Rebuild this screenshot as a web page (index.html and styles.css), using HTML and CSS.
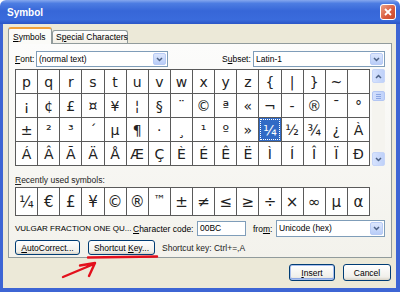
FILE: index.html
```html
<!DOCTYPE html>
<html>
<head>
    <title>Symbol</title>
    <link rel="stylesheet" href="styles.css">
</head>
<body>
    <div class="window">
        <!-- Title bar -->
        <div class="titlebar">
            <span class="title">Symbol</span>
            <span class="close">
                <svg width="8" height="8" viewBox="0 0 8 8"><path d="M1 1L7 7M7 1L1 7" stroke="#fff" stroke-width="1.8"/></svg>
            </span>
        </div>

        <div class="client">
            <div class="tabs">
                <div class="tab active"><u>S</u>ymbols</div>
                <div class="tab">S<u>p</u>ecial Characters</div>
            </div>

            <div class="panel">
                <div class="font-row">
                    <label class="font-label"><u>F</u>ont:</label>
                    <div class="select font-select">
                        <span class="value">(normal text)</span>
                        <span class="drop"><svg width="7" height="5" viewBox="0 0 7 5"><path d="M1 1L3.5 3.5L6 1" stroke="#4d6185" stroke-width="1.5" fill="none"/></svg></span>
                    </div>
                    <label class="subset-label">S<u>u</u>bset:</label>
                    <div class="select subset-select">
                        <span class="value">Latin-1</span>
                        <span class="drop"><svg width="7" height="5" viewBox="0 0 7 5"><path d="M1 1L3.5 3.5L6 1" stroke="#4d6185" stroke-width="1.5" fill="none"/></svg></span>
                    </div>
                </div>

                <div class="grid-wrap">
                    <div class="grid">
                        <div class="cell">p</div><div class="cell">q</div><div class="cell">r</div><div class="cell">s</div>
                        <div class="cell">t</div><div class="cell">u</div><div class="cell">v</div><div class="cell">w</div>
                        <div class="cell">x</div><div class="cell">y</div><div class="cell">z</div><div class="cell">{</div>
                        <div class="cell">|</div><div class="cell">}</div><div class="cell">~</div><div class="cell"></div>

                        <div class="cell">¡</div><div class="cell">¢</div><div class="cell">£</div><div class="cell">¤</div>
                        <div class="cell">¥</div><div class="cell">¦</div><div class="cell">§</div><div class="cell">¨</div>
                        <div class="cell">©</div><div class="cell">ª</div><div class="cell">«</div><div class="cell">¬</div>
                        <div class="cell">-</div><div class="cell">®</div><div class="cell">¯</div><div class="cell">°</div>

                        <div class="cell">±</div><div class="cell">²</div><div class="cell">³</div><div class="cell">´</div>
                        <div class="cell">µ</div><div class="cell">¶</div><div class="cell">·</div><div class="cell">¸</div>
                        <div class="cell">¹</div><div class="cell">º</div><div class="cell">»</div><div class="cell selected">¼</div>
                        <div class="cell">½</div><div class="cell">¾</div><div class="cell">¿</div><div class="cell">À</div>

                        <div class="cell">Á</div><div class="cell">Â</div><div class="cell">Ã</div><div class="cell">Ä</div>
                        <div class="cell">Å</div><div class="cell">Æ</div><div class="cell">Ç</div><div class="cell">È</div>
                        <div class="cell">É</div><div class="cell">Ê</div><div class="cell">Ë</div><div class="cell">Ì</div>
                        <div class="cell">Í</div><div class="cell">Î</div><div class="cell">Ï</div><div class="cell">Ð</div>
                    </div>
                    <div class="scrollbar">
                        <div class="sb-btn"><svg width="7" height="5" viewBox="0 0 7 5"><path d="M1 4L3.5 1.5L6 4" stroke="#4d6185" stroke-width="1.5" fill="none"/></svg></div>
                        <div class="sb-thumb"><span></span><span></span><span></span></div>
                        <div class="sb-track"></div>
                        <div class="sb-btn"><svg width="7" height="5" viewBox="0 0 7 5"><path d="M1 1L3.5 3.5L6 1" stroke="#4d6185" stroke-width="1.5" fill="none"/></svg></div>
                    </div>
                </div>

                <div class="recent-label"><u>R</u>ecently used symbols:</div>
                <div class="recent">
                    <div class="cell">¼</div><div class="cell">€</div><div class="cell">£</div><div class="cell">¥</div>
                    <div class="cell">©</div><div class="cell">®</div><div class="cell tm">™</div><div class="cell">±</div>
                    <div class="cell">≠</div><div class="cell">≤</div><div class="cell">≥</div><div class="cell">÷</div>
                    <div class="cell">×</div><div class="cell">∞</div><div class="cell">µ</div><div class="cell">α</div>
                </div>

                <div class="info-row">
                    <span class="char-name">VULGAR FRACTION ONE QU...</span>
                    <label class="code-label"><u>C</u>haracter code:</label>
                    <div class="field">00BC</div>
                    <label class="from-label">fro<u>m</u>:</label>
                    <div class="select from-select">
                        <span class="value">Unicode (hex)</span>
                        <span class="drop"><svg width="7" height="5" viewBox="0 0 7 5"><path d="M1 1L3.5 3.5L6 1" stroke="#4d6185" stroke-width="1.5" fill="none"/></svg></span>
                    </div>
                </div>

                <div class="btn-row">
                    <button class="btn autocorrect"><u>A</u>utoCorrect...</button>
                    <button class="btn shortcut">Shortcut <u>K</u>ey...</button>
                    <span class="shortcut-text">Shortcut key: Ctrl+=,A</span>
                </div>
            </div>

            <div class="footer">
                <button class="btn insert default"><u>I</u>nsert</button>
                <button class="btn cancel">Cancel</button>
            </div>
        </div>
    </div>

    <!-- red hand-drawn annotation -->
    <svg class="annot" width="400" height="292" viewBox="0 0 400 292">
        <path d="M88 257.5L157 256.5" stroke="#e3101c" stroke-width="2.4" fill="none" stroke-linecap="round"/>
        <path d="M63 277L94 264M80 265.5L95 263L89 276" stroke="#e3101c" stroke-width="2.4" fill="none" stroke-linecap="round" stroke-linejoin="round"/>
    </svg>
</body>
</html>
```

FILE: styles.css
```css
* {
    box-sizing: border-box;
}

body {
    margin: 0;
    font-family: "Liberation Sans", Arial, sans-serif;
    font-size: 8.5px;
    color: #000;
    background: #fff;
}

label,
span,
.tab,
.btn {
    white-space: nowrap;
}

u {
    text-decoration: underline;
}

.window {
    position: relative;
    width: 400px;
    height: 292px;
    display: flex;
    flex-direction: column;
}

/* Title bar */
.titlebar {
    height: 24px;
    display: flex;
    align-items: center;
    justify-content: space-between;
    padding: 0 4px 0 7px;
    background: linear-gradient(#86a8ee 0%, #4d7de2 14%, #3767d8 45%, #3a6bdc 82%, #2a55c6 100%);
    border-radius: 6px 6px 0 0;
}

.title {
    color: #fff;
    font-weight: bold;
    font-size: 10px;
}

.close {
    width: 16px;
    height: 16px;
    border: 1px solid #fff;
    border-radius: 3px;
    background: linear-gradient(135deg, #eba085, #d9593b 60%, #c84a2c);
    display: flex;
    align-items: center;
    justify-content: center;
}

.client {
    flex: 1;
    background: #ece9d8;
    border-left: 3px solid #3d65d4;
    border-right: 4px solid #3d65d4;
    border-bottom: 4px solid #3d65d4;
}

/* Tabs */
.tabs {
    display: flex;
    align-items: flex-end;
    height: 16px;
    margin: 3px 0 0 5px;
    position: relative;
    z-index: 1;
}

.tab {
    height: 13px;
    width: 76px;
    padding-left: 3px;
    line-height: 12px;
    border: 1px solid #919b9c;
    border-bottom: none;
    border-radius: 3px 3px 0 0;
    background: linear-gradient(#fefefe, #f1efe6);
}

.tab.active {
    height: 17px;
    width: 44px;
    margin-bottom: -1px;
    padding: 2px 0 0 4px;
    line-height: 12px;
    border-top: 2px solid #f2a13a;
    background: #fbfbf8;
}

/* Tab panel */
.panel {
    height: 215px;
    margin: 0 4px 0 5px;
    padding: 7px 6px 0 6px;
    border: 1px solid #919b9c;
    background: linear-gradient(#fcfcfb, #f3f2ec);
}

.font-row {
    display: flex;
    align-items: center;
    height: 16px;
}

.font-label {
    width: 21px;
    flex-shrink: 0;
}

.subset-label {
    margin-left: 54px;
    width: 31px;
    flex-shrink: 0;
}

.select {
    display: flex;
    height: 16px;
    flex-shrink: 0;
    border: 1px solid #7f9db9;
    background: #fff;
}

.select .value {
    flex: 1;
    padding-left: 2px;
    line-height: 14px;
}

.select .drop {
    width: 13px;
    margin: 1px;
    border-radius: 2px;
    border: 1px solid #b8cbf5;
    background: linear-gradient(#dde7fd, #b9cdf8);
    display: flex;
    align-items: center;
    justify-content: center;
}

.font-select,
.subset-select {
    width: 132px;
}

/* Symbol grid */
.grid-wrap {
    display: flex;
    margin-top: 2px;
    gap: 2px;
}

.grid,
.recent {
    width: 355px;
    display: grid;
    grid-template-columns: repeat(16, 1fr);
    gap: 1px;
    padding: 1px;
    background: #5a5a5a;
}

.grid {
    grid-auto-rows: 23px;
}

.recent {
    grid-auto-rows: 27px;
    margin-top: 1px;
}

.cell {
    background: #fff;
    display: flex;
    align-items: center;
    justify-content: center;
    font-family: "DejaVu Sans", Verdana, sans-serif;
    font-size: 14px;
    color: #222;
}

.recent .cell {
    font-size: 15px;
}

.recent .cell.tm {
    font-size: 12px;
    align-items: flex-start;
    padding-top: 5px;
}

.cell.selected {
    background: #316ac5;
    color: #fff;
    outline: 1px dotted #fff;
    outline-offset: -2px;
}

.scrollbar {
    width: 13px;
    display: flex;
    flex-direction: column;
    background: #f5f4ef;
}

.sb-btn {
    height: 14px;
    border: 1px solid #c6d5f8;
    border-radius: 2px;
    background: linear-gradient(90deg, #d6e2fd, #bfd1f9);
    display: flex;
    align-items: center;
    justify-content: center;
}

.sb-thumb {
    height: 10px;
    margin-top: 8px;
    border: 1px solid #b3c6f3;
    border-radius: 2px;
    background: linear-gradient(90deg, #d3dffc, #c0d2fa);
    display: flex;
    flex-direction: column;
    align-items: center;
    justify-content: center;
    gap: 1px;
}

.sb-thumb span {
    width: 5px;
    height: 1px;
    background: #8ca6e3;
}

.sb-track {
    flex: 1;
}

.recent-label {
    margin-top: 9px;
    line-height: 11px;
    color: #222;
}

/* Character info */
.info-row {
    display: flex;
    align-items: center;
    height: 17px;
    margin-top: 4px;
}

.char-name {
    width: 118px;
    flex-shrink: 0;
    font-size: 8px;
}

.code-label {
    width: 64px;
    flex-shrink: 0;
}

.field {
    width: 49px;
    height: 15px;
    flex-shrink: 0;
    border: 1px solid #7f9db9;
    background: #fff;
    padding-left: 2px;
    line-height: 13px;
}

.from-label {
    margin-left: 7px;
    width: 23px;
    flex-shrink: 0;
}

.from-select {
    width: 109px;
    height: 17px;
}

.btn-row {
    display: flex;
    align-items: center;
    height: 15px;
    margin-top: 3px;
}

.btn {
    font-family: "Liberation Sans", Arial, sans-serif;
    font-size: 8.5px;
    color: #000;
    padding: 0;
    height: 15px;
    flex-shrink: 0;
    border: 1px solid #003c74;
    border-radius: 3px;
    background: linear-gradient(#ffffff, #f0efea 80%, #d8d3c6);
}

.autocorrect {
    width: 65px;
    margin-right: 8px;
}

.shortcut {
    width: 67px;
    margin-right: 7px;
}

.shortcut-text {
    color: #222;
}

.footer {
    display: flex;
    justify-content: flex-end;
    gap: 8px;
    margin: 6px 5px 0 0;
}

.footer .btn {
    height: 17px;
}

.insert {
    width: 46px;
}

.cancel {
    width: 48px;
}

.btn.default {
    box-shadow: inset 0 0 0 1px #a9bfee, inset 0 -1px 0 1px #8fa9e4;
}

/* Red annotation drawn over the screenshot */
.annot {
    position: absolute;
    top: 0;
    left: 0;
    pointer-events: none;
}
```
